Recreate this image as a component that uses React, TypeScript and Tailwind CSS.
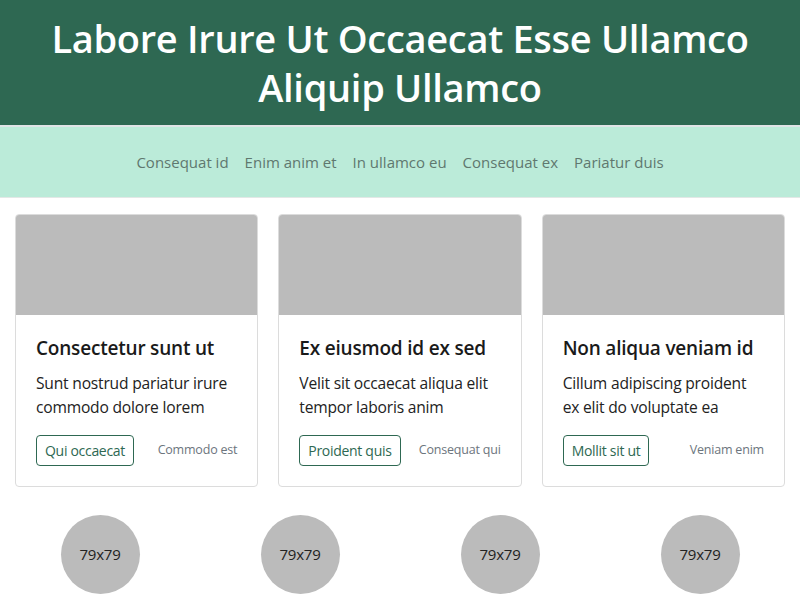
const navLinks = ['Consequat id', 'Enim anim et', 'In ullamco eu', 'Consequat ex', 'Pariatur duis']

const cards = [
  {
    title: 'Consectetur sunt ut',
    text: 'Sunt nostrud pariatur irure commodo dolore lorem',
    button: 'Qui occaecat',
    note: 'Commodo est',
  },
  {
    title: 'Ex eiusmod id ex sed',
    text: 'Velit sit occaecat aliqua elit tempor laboris anim',
    button: 'Proident quis',
    note: 'Consequat qui',
  },
  {
    title: 'Non aliqua veniam id',
    text: 'Cillum adipiscing proident ex elit do voluptate ea',
    button: 'Mollit sit ut',
    note: 'Veniam enim',
  },
]

export default function App() {
  return (
    <div
      className="w-[800px] h-[600px] overflow-hidden bg-white"
      style={{ fontFamily: '"Segoe UI", "Open Sans", "Noto Sans", sans-serif' }}
    >
      <header className="h-[127px] bg-[#2e6852] border-b-2 border-[#dfe3e6] flex items-center justify-center px-10">
        <h1 className="text-[38px] leading-[49px] font-semibold text-white text-center tracking-[-0.3px]">
          Labore Irure Ut Occaecat Esse Ullamco Aliquip Ullamco
        </h1>
      </header>

      <nav className="h-[71px] bg-[#bbebd9] border-b border-[#e3e8e6] flex items-center justify-center gap-4">
        {navLinks.map((link) => (
          <a key={link} className="text-[15px] text-[#5f786f]">
            {link}
          </a>
        ))}
      </nav>

      <main className="px-[15px] pt-4 grid grid-cols-3 gap-5">
        {cards.map((card) => (
          <div key={card.title} className="h-[273px] border border-[#dcdcdc] rounded-[4px] overflow-hidden bg-white">
            <div className="h-[100px] bg-[#bbbbbb]" />
            <div className="px-5 pt-[20px]">
              <h2 className="text-[19px] leading-[26px] font-semibold text-[#1a1a1a] tracking-[-0.2px]">
                {card.title}
              </h2>
              <p className="mt-[10px] text-[15.6px] leading-[24px] text-[#222] tracking-[-0.2px]">{card.text}</p>
              <div className="mt-[16px] flex items-center justify-between">
                <button className="h-[31px] px-2 border border-[#2e6852] rounded-[4px] text-[14px] text-[#2e6852] tracking-[-0.3px]">
                  {card.button}
                </button>
                <span className="text-[12.5px] text-[#6c757d] tracking-[-0.2px]">{card.note}</span>
              </div>
            </div>
          </div>
        ))}
      </main>

      <section className="grid grid-cols-4 mt-7">
        {[0, 1, 2, 3].map((i) => (
          <div key={i} className="flex justify-center">
            <div className="w-[79px] h-[79px] rounded-full bg-[#bbbbbb] flex items-center justify-center text-[15px] text-[#222] tracking-[-0.2px]">
              79x79
            </div>
          </div>
        ))}
      </section>
    </div>
  )
}
